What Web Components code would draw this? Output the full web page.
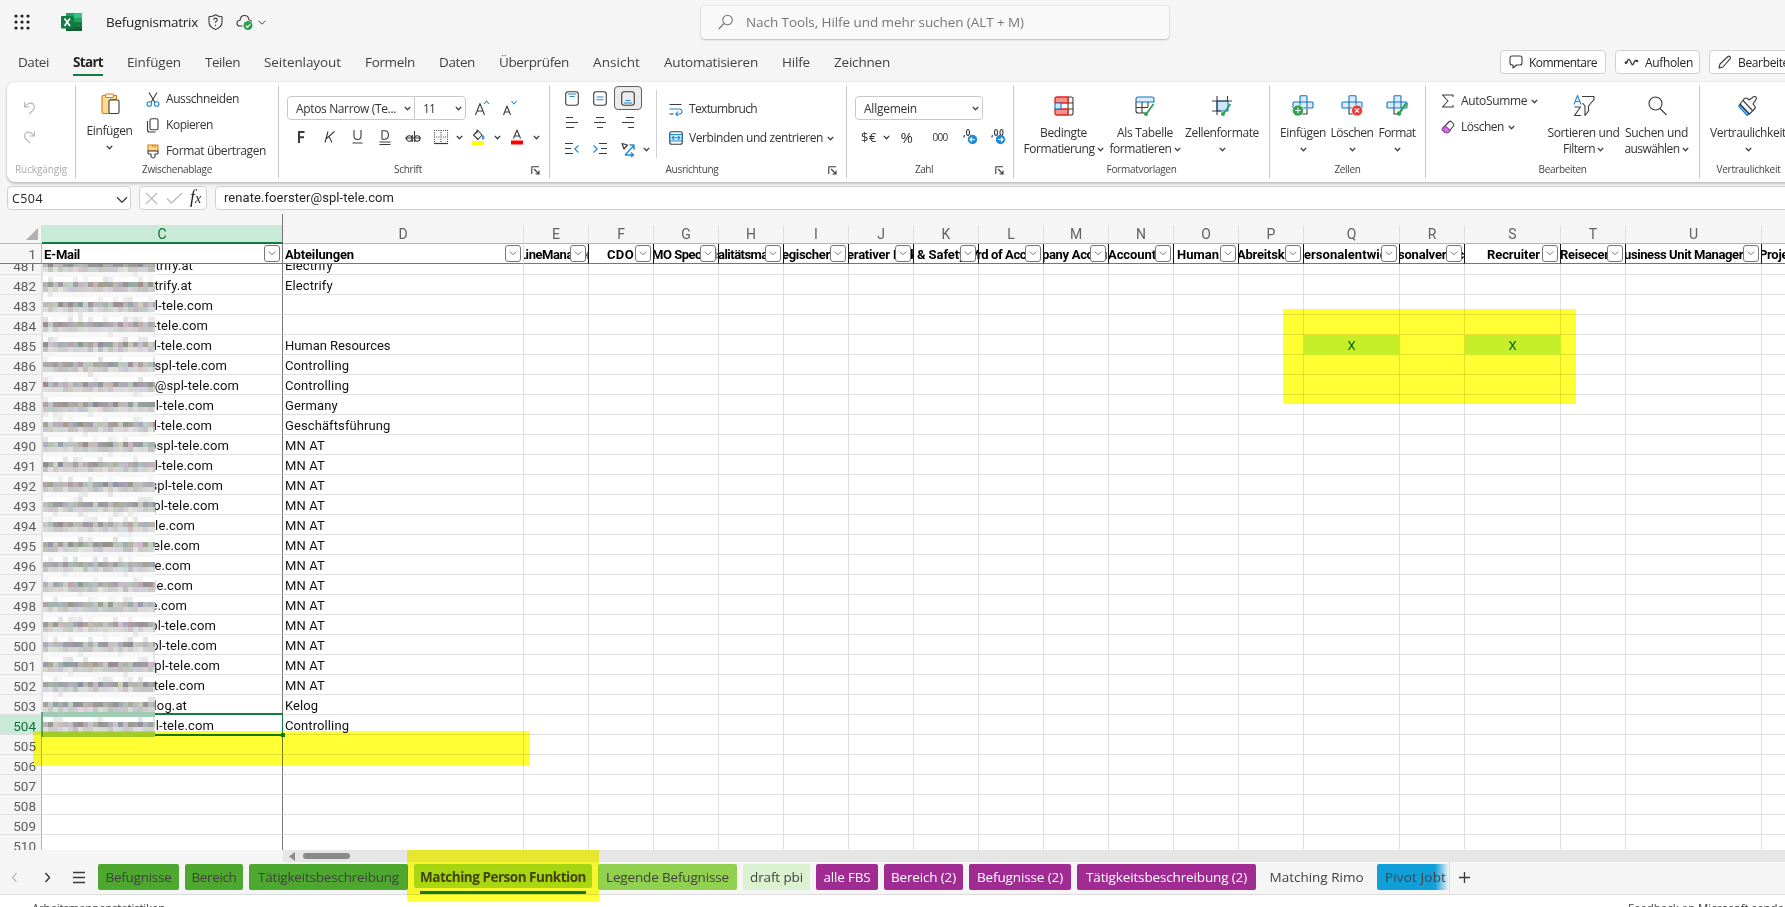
<!DOCTYPE html>
<html lang="de">
<head>
<meta charset="utf-8">
<title>Befugnismatrix</title>
<style>
  html, body { margin: 0; height: 100%; overflow: hidden; }
  body { font-family: "Open Sans", "Noto Sans", sans-serif; font-size: 13px; color: #333; background: #f5f5f5; }
</style>
</head>
<body>
<excel-app>
  <title-bar slot="title" name="Befugnismatrix"></title-bar>
  <menu-bar slot="menu"></menu-bar>
  <ribbon-bar slot="ribbon">
    <ribbon-group w="69" label="Rückgängig" lw="52" muted>
      <div style="display:flex;flex-direction:column;gap:15px;padding:15px 0 0 16px">
        <ui-icon name="undo"></ui-icon><ui-icon name="redo"></ui-icon>
      </div>
    </ribbon-group>
    <ribbon-group w="203" label="Zwischenablage" lw="70">
      <big-command icon="paste" a="Einfügen" aw="46" style="width:47px;margin:-2px 0 0 10px"></big-command>
      <div style="display:flex;flex-direction:column;margin-left:13px">
        <row-command icon="cut" w="73">Ausschneiden</row-command>
        <row-command icon="copy" w="47">Kopieren</row-command>
        <row-command icon="painter" w="100">Format übertragen</row-command>
      </div>
    </ribbon-group>
    <ribbon-group w="271" label="Schrift" lw="28" launcher>
      <div style="padding:10px 0 0 8px">
        <div style="display:flex;align-items:center">
          <combo-box style="width:128px;border-radius:4px 0 0 4px" w="100">Aptos Narrow (Te...</combo-box>
          <combo-box style="width:52px;margin-left:-1px;border-radius:0 4px 4px 0" w="12">11</combo-box>
          <ui-icon name="grow" style="margin-left:8px"></ui-icon>
          <ui-icon name="shrink" style="margin-left:12px"></ui-icon>
        </div>
        <icon-strip items="bold:28 italic:28 underline:28 double:28 strike:28 borders:28 chev:8 fill:30 chev:8 fontcolor:31 chev:8" style="margin-top:5px"></icon-strip>
      </div>
    </ribbon-group>
    <ribbon-group w="297" label="Ausrichtung" lw="53" launcher>
      <div style="display:flex;flex-direction:column;padding-left:8px;width:98px">
        <icon-strip items="vtop:28 vmid:28 vbot:28" selected="2"></icon-strip>
        <icon-strip items="left:28 center:28 right:28" style="margin-top:1px"></icon-strip>
        <icon-strip items="outdent:28 indent:28 orient:28 chev:9" style="margin-top:2px"></icon-strip>
      </div>
      <div style="display:flex;flex-direction:column;gap:3px;margin-top:4px;height:68px;border-left:1px solid #d1d1d1;padding-left:12px">
        <row-command icon="wrap" w="68" style="margin-top:6px">Textumbruch</row-command>
        <row-command icon="merge" w="134" chev>Verbinden und zentrieren</row-command>
      </div>
    </ribbon-group>
    <ribbon-group w="167" label="Zahl" lw="18" launcher>
      <div style="padding:10px 0 0 8px">
        <combo-box style="width:128px" w="53">Allgemein</combo-box>
        <icon-strip items="currency:28 chev:7 percent:34 thousands:32 decinc:28 decdec:28" style="margin-top:5px"></icon-strip>
      </div>
    </ribbon-group>
    <ribbon-group w="256" label="Formatvorlagen" lw="70">
      <big-command icon="condfmt" a="Bedingte" aw="47" b="Formatierung" bw="71" style="width:81px;margin-left:9px"></big-command>
      <big-command icon="table" a="Als Tabelle" aw="56" b="formatieren" bw="62" style="width:72px;margin-left:5px"></big-command>
      <big-command icon="cellfmt" a="Zellenformate" aw="74" style="width:76px;margin-left:3px"></big-command>
    </ribbon-group>
    <ribbon-group w="156" label="Zellen" lw="26">
      <big-command icon="cellins" a="Einfügen" aw="46" style="width:46px;margin-left:10px"></big-command>
      <big-command icon="celldel" a="Löschen" aw="43" style="width:44px;margin-left:4px"></big-command>
      <big-command icon="cellfor" a="Format" aw="37" style="width:38px;margin-left:4px"></big-command>
    </ribbon-group>
    <ribbon-group w="274" label="Bearbeiten" lw="48">
      <div style="display:flex;flex-direction:column;flex:none;padding:2px 0 0 15px;width:86px">
        <row-command icon="sum" w="66" chev>AutoSumme</row-command>
        <row-command icon="eraser" w="43" chev>Löschen</row-command>
      </div>
      <big-command icon="sort" a="Sortieren und" aw="72" b="Filtern" bw="32" style="width:73px;margin-left:20px"></big-command>
      <big-command icon="find" a="Suchen und" aw="63" b="auswählen" bw="55" style="width:65px;margin-left:4px"></big-command>
    </ribbon-group>
    <ribbon-group w="97" label="Vertraulichkeit" lw="64">
      <big-command icon="stamp" a="Vertraulichkeit" aw="76" style="width:76px;margin-left:10px"></big-command>
    </ribbon-group>
  </ribbon-bar>
  <formula-bar slot="formula" cell="C504">renate.foerster@spl-tele.com</formula-bar>
  <sheet-grid slot="grid"></sheet-grid>
  <sheet-tabs slot="tabs"></sheet-tabs>
  <status-bar slot="status"></status-bar>
  <marker-box slot="marks" style="left:1283px;top:309px;width:293px;height:95px"></marker-box>
  <marker-box slot="marks" style="left:33px;top:731px;width:497px;height:35px"></marker-box>
  <marker-box slot="marks" style="left:407px;top:850px;width:192px;height:51px"></marker-box>
</excel-app>

<script>
const DARK = '#3b3b3b', BLUE = '#1e8ad6', GREEN = '#2ea14f'

// name: [width, height, svg content]
const ICONS = {
  chev: [7, 5, `<path d="M.8 .9 3.5 3.7 6.2 .9" stroke-width="1.3"/>`],
  chevL: [12, 8, `<path d="M1 1.2 6 6.2 11 1.2" stroke-width="1.3"/>`],
  undo: [13, 14, `<path d="M1.5 1v5h5M1.8 5.8C4 2.5 8 1 10.3 3.2c2.4 2.3.8 5-1 6.6L6 13" stroke="#b5b5b5"/>`],
  redo: [13, 14, `<path d="M11.5 1v5h-5M11.2 5.8C9 2.5 5 1 2.7 3.2.3 5.500 1.900 8.200 3.700 9.800L7 13" stroke="#b5b5b5"/>`],
  paste: [20, 22, `<path d="M3.500 2.500h13v4h-6v14h-7q-1.500 0-1.500-1.500V4q0-1.500 1.500-1.500Z" fill="#fbdc94" stroke="#d9780f"/><rect x="5.500" y="1" width="8" height="3.500" rx="1.500" fill="#fff" stroke="#d9780f"/><rect x="9" y="7" width="10" height="13.500" rx="1.500" fill="#fff"/>`],
  cut: [14, 15, `<path d="M3 .5 9 10.500M11 .5 5 10.500"/><circle cx="3.300" cy="12" r="2.300" stroke="${BLUE}"/><circle cx="10.700" cy="12" r="2.300" stroke="${BLUE}"/>`],
  copy: [14, 15, `<rect x="4" y=".7" width="8" height="11" rx="1.500"/><path d="M1.500 3v9q0 2 2 2h6"/>`],
  painter: [14, 15, `<path d="M2 1h10v6H2Z" fill="#fbdc94" stroke="#d9780f"/><path d="M9 1v3M6.500 1v2" stroke="#d9780f"/><path d="M2 7h10v2q0 1-1 1H9v2.500q-2 3-4 0V10H3q-1 0-1-1Z" fill="#fff"/>`],
  grow: [16, 16, `<path d="M1.500 15 6 3.500 10.500 15M3 11h6"/><path d="m10 4 2.500-3L15 4" stroke="${BLUE}"/>`],
  shrink: [16, 16, `<path d="M1.500 15 5 6l3.500 9M2.700 12h4.600"/><path d="m9.500 1 2.500 3 2.500-3" stroke="${BLUE}"/>`],
  bold: [8, 12, `<path d="M2 12V1h5.500M2 6.300h5" stroke-width="2"/>`],
  italic: [11, 12, `<path d="M4 .5 1 11.500M10.500 .5 2.500 7.500M5 5.500l3 6"/>`],
  underline: [11, 14, `<path d="M2 0v6q0 3.500 3.500 3.500T9 6V0M.5 13h10"/>`],
  double: [12, 15, `<path d="M3 .8h2.500q4 0 4 4.200t-4 4.200H3ZM.5 12h11M.5 14.500h11"/>`],
  strike: [16, 14, `<circle cx="4.300" cy="8.500" r="2.800"/><path d="M7.300 5v7M9.500 1v11M0 8h16"/><circle cx="12.200" cy="8.500" r="2.700"/>`],
  borders: [14, 14, `<path d="M.5 0v13M13.500 0v13M7 0v13M0 .5h14M0 7h14" stroke-dasharray="1 1.200"/><path d="M0 13.500h14" stroke-width="1.200"/>`],
  fill: [14, 16, `<path d="M2.500 6 7 1.500 11 6 7 10.500ZM6 .5v4"/><path d="M12 6.500q2 3 .3 3.500T12 6.500" stroke="${BLUE}"/><path d="M1 12h12v4H1Z" fill="#ff0" stroke="none"/>`],
  fontcolor: [14, 16, `<path d="M3.500 9.500 7 1l3.500 8.500M4.600 7h4.800"/><path d="M1 11.500h12v4H1Z" fill="#f00" stroke="none"/>`],
  vtop: [14, 15, `<rect x=".7" y=".7" width="12.600" height="13.600" rx="2.500"/><path d="M3 3h8M4.500 5.500h5" stroke="${BLUE}"/>`],
  vmid: [14, 15, `<rect x=".7" y=".7" width="12.600" height="13.600" rx="2.500"/><path d="M3.500 6h7M3.500 8.700h7" stroke="${BLUE}"/>`],
  vbot: [14, 15, `<rect x=".7" y=".7" width="12.600" height="13.600" rx="2.500"/><path d="M4.500 9.500h5M3 12h8" stroke="${BLUE}"/>`],
  left: [14, 12, `<path d="M1 .5h7M1 5.500h12M1 10.500h8"/>`],
  center: [14, 12, `<path d="M3 .5h8M1 5.500h12M4 10.500h6"/>`],
  right: [14, 12, `<path d="M5 .5h8M1 5.500h12M7 10.500h6"/>`],
  outdent: [16, 12, `<path d="M1 .5h8M1 5.500h6M1 10.500h8"/><path d="M14.500 2.500 10.800 6l3.700 3.500" stroke="${BLUE}"/>`],
  indent: [16, 12, `<path d="M7 .5h8M9 5.500h6M7 10.500h8"/><path d="M1.500 2.500 5.200 6 1.500 9.500" stroke="${BLUE}"/>`],
  orient: [15, 15, `<path d="M1 1.500 6.500 3 3 7Z" stroke-width="1.200"/><path d="M4 13 13 3.500M8.500 3H13v5M4 13h8M10 10.500l2.500 2.500-2.500 2" stroke="${BLUE}" stroke-width="1.300"/>`],
  wrap: [14, 13, `<path d="M.5 1.500h12M.5 11h4"/><path d="M.5 6H10q3 0 3 2.500T10 11H7M9 8.500 6.700 11 9 13" stroke="${BLUE}"/>`],
  merge: [14, 14, `<rect x=".7" y=".7" width="12.600" height="12.600" rx="2"/><path d="M1 3.500h12v6.500H1Z" fill="#dcecfa" stroke="${BLUE}"/><path d="M3 6.800h8M5 4.800 3 6.800l2 2M9 4.800l2 2-2 2" stroke="${BLUE}"/>`],
  decinc: [15, 16, `<path d="M1.500 6 .8 8.500"/><ellipse cx="5" cy="3.500" rx="1.500" ry="3"/><circle cx="9.500" cy="10.500" r="4.700" fill="${BLUE}" stroke="none"/><path d="M12 10.500H7M9 8.500l-2 2 2 2" stroke="#fff"/>`],
  decdec: [15, 16, `<path d="M1.500 6 .8 8.500"/><ellipse cx="5" cy="3.500" rx="1.500" ry="3"/><ellipse cx="10.500" cy="3.500" rx="1.500" ry="3"/><circle cx="9.500" cy="10.500" r="4.700" fill="${BLUE}" stroke="none"/><path d="M7 10.500h5M10 8.500l2 2-2 2" stroke="#fff"/>`],
  condfmt: [20, 20, `<path d="M14 1h3q2 0 2 2v14q0 2-2 2h-3M14 7h5M14 13h5M14 1v18" /><path d="M14 1v6H1V3q0-2 2-2ZM14 19v-6H1v4q0 2 2 2Z" fill="#ff8f8f" stroke="#d9241c" stroke-width="1.300"/><path d="M1 7h6v6H1Z" fill="#cfe6fa" stroke="#1173c5"/>`],
  table: [20, 20, `<path d="M1 6v9q0 2 2 2h7M1 11.500h12M7 6v11M13 6v5"/><path d="M1 6V3q0-2 2-2h14q2 0 2 2v3Z" fill="#dcecfa" stroke="#1173c5"/><path d="m18.500 8-6.500 9" stroke="${GREEN}" stroke-width="1.800"/><circle cx="11" cy="18" r="2" fill="${GREEN}" stroke="none"/>`],
  cellfmt: [20, 20, `<path d="M5 5h11v10H5Z" fill="#cfe6fa" stroke="#1173c5"/><path d="M5 0v19M15.500 0v5M0 5h20M0 15h9"/><path d="m18.500 8-6.500 9" stroke="${GREEN}" stroke-width="1.800"/><circle cx="11" cy="18" r="2" fill="${GREEN}" stroke="none"/>`],
  cellins: [22, 22, `<path d="M8 13v6h7v-5M2 13V7"/><path d="M8 1.500q0-.8.800-.8h5.400q.8 0 .8.800V7h5q1 0 1 1v4q0 1-1 1H2q-1 0-1-1V8q0-1 1-1h6Z" fill="#dcecfa" stroke="#1173c5"/><path d="M8 7v6M15 7v6M8 7h7" stroke="#1173c5"/><circle cx="6" cy="15.500" r="5.500" fill="${GREEN}" stroke="#fff" stroke-width=".6"/><path d="M3.200 15.500h5.600M6 12.700v5.600" stroke="#fff"/>`],
  celldel: [22, 22, `<path d="M8 13v6h5"/><path d="M8 1.500q0-.8.800-.8h5.400q.8 0 .8.800V7h5q1 0 1 1v4q0 1-1 1H2q-1 0-1-1V8q0-1 1-1h6Z" fill="#dcecfa" stroke="#1173c5"/><path d="M8 7v6M15 7v6M8 7h7" stroke="#1173c5"/><circle cx="16" cy="15.500" r="5.500" fill="#e83b3b" stroke="#fff" stroke-width=".6"/><path d="m14 13.500 4 4M18 13.500l-4 4" stroke="#fff"/>`],
  cellfor: [22, 22, `<path d="M8 13v6h3"/><path d="M8 1.500q0-.8.800-.8h5.400q.8 0 .8.800V7h5q1 0 1 1v4q0 1-1 1H2q-1 0-1-1V8q0-1 1-1h6Z" fill="#dcecfa" stroke="#1173c5"/><path d="M8 7v6M15 7v6M8 7h7" stroke="#1173c5"/><path d="m20.500 8-6.500 9" stroke="${GREEN}" stroke-width="2.200"/><circle cx="13" cy="18.500" r="2.200" fill="${GREEN}" stroke="none"/>`],
  sum: [14, 14, `<path d="M12 3V1H1.500l5.500 6-5.500 6H12v-2"/>`],
  eraser: [14, 14, `<path d="m1.500 8.500 6.800-7q1-.8 2 0l2.200 2.500q.8 1 0 2L7 12.500H4.500L1.500 10q-.7-.8 0-1.500Z"/><path d="M1.500 8.500 4.300 6l5 4.500-2.300 2.300H4.500L1.500 10q-.7-.8 0-1.500Z" fill="#c878d0" stroke="#a044ad"/>`],
  sort: [22, 22, `<path d="m1 9.500 3.500-9 3.500 9M2.200 6.500h4.600" stroke="${BLUE}"/><path d="M1.500 12H7.500L1.500 20.500H8"/><path d="M9 1.500h12v3l-5.500 6.500v5l-3.500 4.500V11L9.500 8"/>`],
  find: [20, 20, `<circle cx="8.500" cy="7.500" r="6.500"/><path d="m13 12.500 6.500 6.500"/>`],
  stamp: [20, 20, `<path d="m1.500 8.500 9.500 9.500-2 1.500L.8 10.500Z" fill="#7dbcf0" stroke="#1173c5"/><path d="m2 8 4-5q2-2 4 0l1 1 4.500-3.200q1.500-.8 2.500.4t0 2.400L15 8l1.500 1.800q1.500 1.700 0 3.200L11.500 18Z" fill="#fff"/><path d="m5 4.500 9.500 10"/>`],
  launcher: [9, 9, `<path d="M.8 8V.8H8M3 3l5 5M8 4.500V8H4.500"/>`],
  waffle: [16, 16, [2, 8, 14].map(y => [2, 8, 14].map(x => `<circle cx="${x}" cy="${y}" r="1.600" fill="#222" stroke="none"/>`).join('')).join('')],
  search: [16, 16, `<circle cx="9.500" cy="6" r="4.800" stroke="#777"/><path d="M6 9.500.8 15" stroke="#777"/>`],
  shield: [15, 16, `<path d="M7.500 .8q3 2 6.500 2v5.500q0 4.700-6.500 7.200Q1 13 1 8.300V2.800q3.500 0 6.500-2Z"/><path d="M5.700 5.800q.2-1.700 1.800-1.700t1.700 1.600q0 1-1 1.600-.7.500-.7 1.500M7.500 10.800v1.200"/>`],
  cloud: [17, 16, `<path d="M6.500 12H4Q1 12 1 9.200T4 6.500Q4.500 1.500 8.500 1.500T13 6q2 0 2.700 1.500"/><circle cx="12" cy="11.500" r="4.500" fill="${GREEN}" stroke="none"/><path d="m9.800 11.700 1.600 1.600 3-3.300" stroke="#fff"/>`],
  comment: [14, 14, `<path d="M3 1h8q2 0 2 2v5q0 2-2 2H7.500L4 13v-3H3Q1 10 1 8V3q0-2 2-2Z"/>`],
  catchup: [15, 8, `<path d="M1 5q1.500 1 2.500-2T6 2.500l2 4q1 1 2-2t2.500-1.500" stroke-width="1.300"/><circle cx="2" cy="4.500" r="1.300" fill="#3b3b3b" stroke="none"/><circle cx="13" cy="3" r="1.300" fill="#3b3b3b" stroke="none"/>`],
  pencil: [14, 14, `<path d="m1 13 1-4 8-7.500q1-.8 2 .2t.2 2L5 12Z"/>`],
  cross: [13, 13, `<path d="m1 1 11 11M12 1 1 12" stroke="#bbb" stroke-width="1.300"/>`],
  check: [17, 12, `<path d="m1 6.500 4.500 4.500L16 1" stroke="#bbb" stroke-width="1.300"/>`],
  prev: [7, 11, `<path d="M5.500 1 1.500 5.500l4 4.500" stroke="#bbb" stroke-width="1.300"/>`],
  next: [7, 11, `<path d="m1.500 1 4 4.500-4 4.500" stroke-width="1.500"/>`],
  menu: [12, 11, `<path d="M0 .5h12M0 5.500h12M0 10.500h12" stroke-width="1.300"/>`],
  plus: [11, 11, `<path d="M0 5.500h11M5.500 0v11" stroke-width="1.300"/>`]
}

// icons made of characters
const GLYPHS = { currency: ['$€', 13, 16], percent: ['%', 15, 13], thousands: ['000', 10, 15] }

const glyph = (name) => {
  const [text, size, w] = GLYPHS[name]
  return `<fit-text w="${w}" style="font-size:${size}px">${text}</fit-text>`
}

const icon = (name, extra = '') => GLYPHS[name] ? glyph(name) : `<ui-icon name="${name}" ${extra}></ui-icon>`

class Base extends HTMLElement {
  constructor () {
    super()
    this.attachShadow({mode: 'open'})
  }

  connectedCallback () {
    this.shadowRoot.innerHTML = `<style>${this.css()}</style>${this.html()}`
  }

  css () { return '' }
  html () { return '<slot></slot>' }
  attr (name) { return this.getAttribute(name) || '' }
}

class ExcelApp extends Base {
  css () {
    return `
      :host { display: flex; flex-direction: column; position: relative; width: 100%; height: 907px; overflow: hidden; isolation: isolate; background: #f5f5f5; }
    `
  }
  html () {
    return ['title', 'menu', 'ribbon', 'formula', 'grid', 'tabs', 'status', 'marks'].map(n => `<slot name="${n}"></slot>`).join('')
  }
}

class UiIcon extends Base {
  css () {
    return `
      :host { display: inline-flex; flex: none; }
      svg { display: block; overflow: visible; }
    `
  }
  html () {
    const [w, h, body] = ICONS[this.attr('name')]
    return `<svg width="${w}" height="${h}" viewBox="0 0 ${w} ${h}" fill="none" stroke="${DARK}" stroke-width="1.1" stroke-linejoin="round">${body}</svg>`
  }
}

// Text tracked in or out so that it fills a given width
class FitText extends Base {
  css () {
    return `
      :host { display: inline-block; white-space: pre; flex: none; width: ${this.attr('w')}px; }
    `
  }
  html () { return '<span><slot></slot></span>' }
  connectedCallback () {
    super.connectedCallback()
    const span = this.shadowRoot.querySelector('span')
    const diff = this.attr('w') - span.getBoundingClientRect().width
    span.style.letterSpacing = (diff / this.textContent.length).toFixed(3) + 'px'
  }
}

class TitleBar extends Base {
  css () {
    return `
      :host { display: flex; align-items: center; height: 44px; flex: none; padding-left: 14px; box-sizing: border-box; }
      .logo { margin: 0 24px 0 31px; }
      .name { font-size: 13.5px; color: #242424; }
      .search { display: flex; align-items: center; box-sizing: border-box; width: 468px; height: 33px; margin-left: 435px; padding-left: 17px; gap: 12px;
        background: #f9f9f9; border-radius: 4px; box-shadow: 0 0 2px #0002, 0 1px 2px #0003; color: #777; font-size: 13.5px; }
    `
  }
  html () {
    return `
      ${icon('waffle')}
      <svg class="logo" width="21" height="18" viewBox="0 0 21 18">
        <path d="M5 0h16v18H5Z" fill="#185c37"/><path d="M5 0h8v5H5Z" fill="#21a366"/><path d="M13 0h8v5h-8Z" fill="#33c481"/>
        <path d="M5 5h8v4.500H5Z" fill="#107c41"/><path d="M13 5h8v4.500h-8Z" fill="#21a366"/><path d="M13 9.500h8v4.500h-8Z" fill="#107c41"/>
        <rect y="3" width="12.500" height="12.500" rx="1" fill="#107c41"/><path d="m3.500 5.500 5.500 7.500M9 5.500 3.500 13" stroke="#fff" stroke-width="1.700"/>
      </svg>
      <fit-text class="name" w="92">${this.attr('name')}</fit-text>
      ${icon('shield', 'style="margin-left:10px"')}
      ${icon('cloud', 'style="margin-left:13px"')}
      <svg width="8" height="5" viewBox="0 0 8 5" style="margin-left:5px" fill="none" stroke="#444"><path d="m.5 .7 3.500 3.500L7.500 .7"/></svg>
      <div class="search">${icon('search')}<fit-text w="278">Nach Tools, Hilfe und mehr suchen (ALT + M)</fit-text></div>
    `
  }
}

class MenuBar extends Base {
  css () {
    return `
      :host { display: flex; align-items: center; height: 38px; flex: none; font-size: 13.5px; color: #424242; }
      nav { display: flex; gap: 24px; padding-left: 18px; width: 1482px; box-sizing: border-box; flex: none; height: 38px; }
      nav > * { height: 30px; line-height: 36px; border-bottom: 2px solid transparent; }
      .active { font-weight: 700; color: #242424; border-color: #107c41; }
      .buttons { display: flex; gap: 9px; margin: -2px 0 0 18px; flex: none; }
      .button { display: flex; align-items: center; gap: 6px; height: 24px; box-sizing: border-box; background: #fff; border: 1px solid #d1d1d1; border-radius: 4px; padding-left: 8px; font-size: 12px; color: #242424; }
    `
  }
  html () {
    const items = [['Datei', 31], ['Start', 30], ['Einfügen', 54], ['Teilen', 35], ['Seitenlayout', 77], ['Formeln', 50], ['Daten', 36],
      ['Überprüfen', 70], ['Ansicht', 47], ['Automatisieren', 94], ['Hilfe', 28], ['Zeichnen', 56]]
    const buttons = [['comment', 'Kommentare', 68, 106], ['catchup', 'Aufholen', 48, 85], ['pencil', 'Bearbeiten', 58, 110]]
    return `
      <nav>${items.map(([t, w]) => `<fit-text w="${w}" class="${t == 'Start' ? 'active' : ''}">${t}</fit-text>`).join('')}</nav>
      <div class="buttons">
        ${buttons.map(([i, t, w, bw]) => `<div class="button" style="width:${bw}px">${icon(i)}<fit-text w="${w}">${t}</fit-text></div>`).join('')}
      </div>
    `
  }
}

class RibbonBar extends Base {
  css () {
    return `
      :host { display: flex; flex: none; height: 100px; margin: 0 -10px 0 7px; padding-top: 4px; box-sizing: border-box;
        background: #fff; border-radius: 8px; box-shadow: 0 0 2px #0002, 0 2px 3px #0003; font-size: 12px; color: #333; }
    `
  }
}

class RibbonGroup extends Base {
  css () {
    const muted = this.hasAttribute('muted')
    return `
      :host { display: flex; flex-direction: column; flex: none; box-sizing: border-box; width: ${this.attr('w')}px; height: 92px; border-right: 1px solid #c8c8c8; }
      :host(:last-of-type) { border: 0; }
      .body { display: flex; align-items: flex-start; height: 75px; }
      .label { display: flex; align-items: center; height: 16px; line-height: 16px; font-size: 10px; color: ${muted ? '#aaa' : '#444'}; }
      .text { flex: 1; text-align: center; }
      .launch { width: 12px; margin-right: 6px; margin-left: -6px; padding-top: 4px; }
    `
  }
  html () {
    return `
      <div class="body"><slot></slot></div>
      <div class="label">
        <div class="text"><fit-text w="${this.attr('lw')}">${this.attr('label')}</fit-text></div>
        ${this.hasAttribute('launcher') ? `<div class="launch">${icon('launcher')}</div>` : ''}
      </div>
    `
  }
}

class BigCommand extends Base {
  css () {
    return `
      :host { display: flex; flex-direction: column; align-items: center; flex: none; padding-top: 10px; line-height: 16px; }
      .icon { display: flex; align-items: center; justify-content: center; height: 20px; margin-bottom: 9px; }
      .row { display: flex; align-items: center; gap: 2px; height: 16px; }
    `
  }
  html () {
    const b = this.attr('b')
    return `
      <div class="icon">${icon(this.attr('icon'))}</div>
      <fit-text w="${this.attr('aw')}">${this.attr('a')}</fit-text>
      <div class="row">${b ? `<fit-text w="${this.attr('bw')}">${b}</fit-text>` : ''}${icon('chev')}</div>
    `
  }
}

class RowCommand extends Base {
  css () {
    return `
      :host { display: flex; align-items: center; height: 26px; line-height: 26px; }
      .icon { width: 20px; display: flex; align-items: center; flex: none; }
      .chev { display: flex; margin-left: 4px; flex: none; }
    `
  }
  html () {
    return `
      <div class="icon">${icon(this.attr('icon'))}</div>
      <fit-text w="${this.attr('w')}">${this.textContent}</fit-text>
      ${this.hasAttribute('chev') ? `<div class="chev">${icon('chev')}</div>` : ''}
    `
  }
}

class ComboBox extends Base {
  css () {
    return `
      :host { display: flex; align-items: center; justify-content: space-between; box-sizing: border-box; height: 24px; padding: 0 3px 0 8px;
        border: 1px solid #c8c8c8; border-radius: 4px; background: #fff; }
    `
  }
  html () { return `<fit-text w="${this.attr('w')}">${this.textContent}</fit-text>${icon('chev')}` }
}

class IconStrip extends Base {
  css () {
    return `
      :host { display: flex; align-items: center; height: 24px; }
      .item { display: flex; align-items: center; justify-content: center; height: 24px; box-sizing: border-box; flex: none; }
      .selected { border: 1px solid #616161; border-radius: 4px; background: #ebebeb; }
    `
  }
  html () {
    return this.attr('items').split(' ').map((item, i) => {
      const [name, w] = item.split(':')
      return `<div class="item ${this.attr('selected') === String(i) ? 'selected' : ''}" style="width:${w}px">${icon(name)}</div>`
    }).join('')
  }
}

class FormulaBar extends Base {
  css () {
    return `
      :host { display: flex; flex: none; height: 24px; margin-top: 4px; padding-left: 7px; color: #242424; }
      div { display: flex; align-items: center; box-sizing: border-box; height: 24px; background: #fff; border: 1px solid #d1d1d1; border-radius: 4px; flex: none; }
      .name { width: 124px; justify-content: space-between; padding: 0 2px 0 4px; font-size: 12.5px; }
      .name ui-icon { margin-top: 3px; }
      .tools { width: 68px; margin-left: 8px; padding-left: 5px; gap: 8px; }
      .fx { font: italic 18px/20px "Liberation Serif", serif; margin-left: -1px; }
      .fx small { font-size: 14px; }
      .input { flex: 1; margin: 0 -8px 0 8px; padding: 0 0 1px 8px; font: 13px Roboto, sans-serif; }
    `
  }
  html () {
    return `
      <div class="name"><fit-text w="31">${this.attr('cell')}</fit-text>${icon('chevL')}</div>
      <div class="tools">${icon('cross')}${icon('check')}<span class="fx">f<small>x</small></span></div>
      <div class="input"><fit-text w="170">${this.textContent}</fit-text></div>
    `
  }
}

// letter, width, header text, header text width, left offset
const COLUMNS = [
  ['C', 241, 'E-Mail', 36, 2], ['D', 241, 'Abteilungen', 69, 2],
  ['E', 65, 'LineManager', 72, -5], ['F', 65, 'CDO', 27, 18], ['G', 65, 'MO Specialist', 75, -2], ['H', 65, 'alitätsmana', 63, -1],
  ['I', 65, 'egischer Ei', 61, -2], ['J', 65, 'erativer Eink', 70, -2], ['K', 65, '& Safety M', 63, 3], ['L', 65, 'rd of Accou', 63, -2],
  ['M', 65, 'pany Accou', 65, -2], ['N', 65, 'Account of', 63, -1], ['O', 65, 'Human', 42, 3], ['P', 65, 'Abreitskräf', 63, -2],
  ['Q', 96, 'ersonalentwickl', 93, 0], ['R', 65, 'sonalverrec', 66, -2], ['S', 96, 'Recruiter', 53, 22], ['T', 65, 'Reisecente', 62, -1],
  ['U', 136, 'usiness Unit Manager', 119, -2], ['V', 65, 'Projekt', 40, -3]
]

// row, visible end of the address, its right edge, department
const ROWS = [
  [481, 'ctrify.at', 193, 'Electrify'], [482, 'trify.at', 192, 'Electrify'], [483, 'l-tele.com', 213], [484, '-tele.com', 208],
  [485, 'l-tele.com', 212, 'Human Resources'], [486, 'spl-tele.com', 227, 'Controlling'], [487, '@spl-tele.com', 239, 'Controlling'],
  [488, 'l-tele.com', 214, 'Germany'], [489, 'l-tele.com', 212, 'Geschäftsführung'], [490, '@spl-tele.com', 229, 'MN AT'],
  [491, 'l-tele.com', 213, 'MN AT'], [492, 'spl-tele.com', 223, 'MN AT'], [493, 'pl-tele.com', 219, 'MN AT'], [494, 'le.com', 195, 'MN AT'],
  [495, 'ele.com', 200, 'MN AT'], [496, 'e.com', 191, 'MN AT'], [497, 'le.com', 193, 'MN AT'], [498, 'e.com', 187, 'MN AT'],
  [499, 'pl-tele.com', 216, 'MN AT'], [500, 'pl-tele.com', 217, 'MN AT'], [501, 'pl-tele.com', 220, 'MN AT'], [502, 'tele.com', 205, 'MN AT'],
  [503, 'log.at', 187, 'Kelog'], [504, 'l-tele.com', 214, 'Controlling'], [505], [506], [507], [508], [509], [510]
]

class SheetGrid extends Base {
  css () {
    return `
      :host { display: flex; flex-direction: column; flex: none; position: relative; height: 640px; padding-top: 4px; box-sizing: border-box; overflow: hidden;
        font: 13px Roboto, "Liberation Sans", sans-serif; color: #111; }
      .gutter { width: 283px; height: 11px; border-right: 1px solid #777; box-sizing: border-box; flex: none; }
      .row { display: flex; flex: none; height: 20px; }
      .row > * { box-sizing: border-box; flex: none; border-right: 1px solid #e0e0e0; border-bottom: 1px solid #e0e0e0; overflow: hidden; white-space: pre; line-height: 22px; }
      .row > .num { width: 42px; border-right-color: #b5b5b5; background: #f5f5f5; color: #5c5c5c; text-align: right; padding-right: 5px; font-size: 13.5px; }
      .row > .frozen { border-right-color: #777; }
      .row.letters { height: 19px; }
      .letters > * { text-align: center; border-bottom: 1px solid #b5b5b5; color: #616161; font-size: 14px; line-height: 19px; }
      .letters > .corner { width: 42px; display: flex; justify-content: flex-end; align-items: flex-end; padding: 0 3px 3px 0; }
      .letters > .current { background: #caead8; border-bottom: 2px solid #107c41; color: #0e6e3a; }
      .titles { background: #fff; }
      .titles > * { border-bottom-color: #777; border-right-color: #111; display: flex; font-weight: 700; color: #000; line-height: 21px; }
      .titles > .plain { border-right-color: #e0e0e0; }
      .titles > .num { font-weight: 400; display: block; border-right-color: #b5b5b5; }
      .titles .text { flex: 1 1 0; width: 0; overflow: visible; }
      .filter { width: 16px; height: 17px; box-sizing: border-box; margin: 1px 2px 0 0; border: 1px solid #777; border-radius: 3px; background: #fff; display: flex; align-items: center; justify-content: center; flex: none; position: relative; }
      .body { height: 586px; overflow: hidden; background: #fff; flex: none; }
      .rows { margin-top: -9px; }
      .mail { display: flex; justify-content: flex-end; }
      .rows .cell { padding-left: 2px; }
      .rows .cell.mail { padding-left: 0; }
      .rows .x { background: #c6efce; color: #006100; text-align: center; padding: 0; border-color: #c6efce; }
      .rows .num.current { background: #caead8; color: #0e6e3a; }
      .select { position: absolute; left: 41px; top: 503px; width: 242px; height: 23px; border: 2px solid #107c41; border-right-width: 1px; box-sizing: border-box; }
      .handle { position: absolute; left: 281px; top: 523px; width: 4px; height: 4px; background: #107c41; }
      pixel-mask { position: absolute; left: 41px; top: 54px; }
    `
  }
  html () {
    return `
      <div class="gutter"></div>
      <div class="row letters">
        <div class="corner"><svg width="12" height="12"><path d="M12 0v12H0Z" fill="#b0b0b0"/></svg></div>
        ${COLUMNS.map(([c, w]) => `<div class="${c == 'C' ? 'frozen current' : ''}" style="width:${w}px">${c}</div>`).join('')}
      </div>
      <div class="row titles">
        <div class="num">1</div>
        ${COLUMNS.map(([c, w, text, tw, x]) => `<div class="${c == 'C' ? 'frozen' : c == 'D' ? 'plain' : ''}" style="width:${w}px">
          <div class="text"><fit-text w="${tw}" style="margin-left:${x}px">${text}</fit-text></div>
          ${c == 'V' ? '' : `<div class="filter"><svg width="8" height="5" fill="none" stroke="#777"><path d="m.8 .6 3.200 3.200L7.200 .6"/></svg></div>`}
        </div>`).join('')}
      </div>
      <div class="body"><div class="rows">${ROWS.map(row => this.row(row)).join('')}</div></div>
      <div class="select"></div>
      <pixel-mask></pixel-mask>
      <div class="handle"></div>
    `
  }
  row ([n, mail = '', end = 0, dept = '']) {
    const cells = COLUMNS.map(([c, w]) => {
      if (c == 'C') return `<div class="cell mail frozen" style="width:${w}px;padding-right:${end ? 282 - end : 0}px"><span style="letter-spacing:.13px">${mail}</span></div>`
      if (c == 'D') return `<div class="cell" style="width:${w}px;letter-spacing:.1px">${dept == 'Human Resources' ? `<fit-text w="107">${dept}</fit-text>` : dept}</div>`
      const x = n == 485 && (c == 'Q' || c == 'S')
      return `<div class="cell ${x ? 'x' : ''}" style="width:${w}px">${x ? 'X' : ''}</div>`
    })
    return `<div class="row"><div class="num ${n == 504 ? 'current' : ''}">${n}</div>${cells.join('')}</div>`
  }
}

// Mosaic that hides the personal part of the addresses
class PixelMask extends Base {
  css () {
    return `
      :host { display: block; }
      svg { display: block; }
    `
  }
  html () {
    let seed = 17
    const rnd = () => (seed = (seed * 16807) % 2147483647) / 2147483647
    const rect = (x, y, w, h, fill) => `<rect x="${x}" y="${y}" width="${w}" height="${h}" fill="${fill}"/>`
    const tone = (base, spread) => {
      const g = base + (rnd() - .5) * spread
      return `rgb(${[0, 0, 0].map(() => Math.min(255, Math.round(g + (rnd() - .5) * spread * .45))).join()})`
    }
    let out = rect(2, 0, 112, 473, '#f7f7f7') + rect(0, 0, 2, 473, '#e2e2e2')
    for (let r = 0; r < 24; r++) {
      const y = r * 20 - 7
      out += rect(2, y, 112, 10, '#fff')
      for (let i = 0; i < 23; i++) {
        const x = 2 + i * 5
        const w = Math.min(5, 114 - x)
        if (rnd() < .25) out += rect(x, y, w, 5, tone(236, 22))
        out += rect(x, y + 5, w, 5, tone(172, 52))
        out += rect(x, y + 10, w, 5, tone(208, 30))
        if (rnd() < .1) out += rect(x, y + 15, w, 5, tone(236, 16))
      }
    }
    out += rect(0, 448, 114, 5, '#a0ccb4') + rect(0, 468, 114, 5, '#a0ccb4') + rect(0, 448, 2, 25, '#5ca680')
    return `<svg width="114" height="473" shape-rendering="crispEdges">${out}</svg>`
  }
}

class SheetTabs extends Base {
  css () {
    return `
      :host { display: flex; flex-direction: column; flex: none; height: 45px; box-sizing: border-box; border-bottom: 1px solid #dcdcdc; font-size: 13.5px; color: #424242; }
      .scroll { display: flex; align-items: center; height: 12px; margin-left: 283px; padding-left: 6px; gap: 8px; background: #e6e6e6; flex: none; }
      .thumb { width: 47px; height: 6px; border-radius: 3px; background: #8a8a8a; }
      .bar { display: flex; align-items: flex-start; padding-top: 2px; gap: 6px; height: 30px; }
      .nav { display: flex; align-items: center; width: 92px; height: 26px; flex: none; padding-left: 11px; box-sizing: border-box; }
      .tab { display: flex; align-items: center; justify-content: center; height: 26px; border-radius: 2px; flex: none; line-height: 24px; }
      .slot { display: flex; flex-direction: column; align-items: center; gap: 3px; height: 30px; flex: none; }
      .slot .tab { height: 24px; padding-bottom: 0; font-weight: 700; line-height: 28px; }
      .slot fit-text { margin-top: 2px; line-height: 22px; }
      .line { width: 166px; height: 3px; background: #107c41; }
      .cut { width: 72px; overflow: hidden; justify-content: flex-start; padding-left: 8px; box-sizing: border-box; margin-right: -6px;
        background: linear-gradient(90deg, #119fda 58px, #f5f5f5 72px); border-radius: 2px 0 0 2px; }
      .add { display: flex; align-items: center; height: 31px; margin-top: -2px; padding: 0 0 0 9px; border-left: 1px solid #dcdcdc; }
    `
  }
  html () {
    const tabs = [['Befugnisse', 81, 66, '#4ea72e'], ['Bereich', 58, 45, '#4ea72e'], ['Tätigkeitsbeschreibung', 159, 141, '#4ea72e'],
      ['Matching Person Funktion', 178, 166, 'linear-gradient(#a5d54a,#aad84a)'], ['Legende Befugnisse', 139, 123, '#92d050'], ['draft pbi', 67, 53, '#daf2d0'],
      ['alle FBS', 62, 47, '#a02b93'], ['Bereich (2)', 79, 65, '#a02b93'], ['Befugnisse (2)', 102, 86, '#a02b93'],
      ['Tätigkeitsbeschreibung (2)', 179, 161, '#a02b93'], ['Matching Rimo', 109, 94, 'none']]
    return `
      <div class="scroll"><svg width="6" height="9"><path d="M6 0v9L0 4.500Z" fill="#8a8a8a"/></svg><div class="thumb"></div></div>
      <div class="bar">
        <div class="nav">${icon('prev')}${icon('next', 'style="margin-left:26px"')}${icon('menu', 'style="margin-left:22px"')}</div>
        ${tabs.map(([text, w, tw, bg]) => {
          const tab = `<div class="tab" style="width:${w}px;background:${bg};${bg == '#a02b93' ? 'color:#fff' : ''}"><fit-text w="${tw}">${text}</fit-text></div>`
          return text == 'Matching Person Funktion' ? `<div class="slot">${tab}<div class="line"></div></div>` : tab
        }).join('')}
        <div class="tab cut"><fit-text w="61">Pivot Jobt</fit-text></div>
        <div class="add">${icon('plus')}</div>
      </div>
    `
  }
}

class StatusBar extends Base {
  css () {
    return `
      :host { display: flex; justify-content: space-between; flex: none; height: 12px; overflow: hidden; background: #fff; padding: 0 0 0 32px; margin-right: -6px; font-size: 11.5px; line-height: 16px; color: #424242; }
      fit-text { margin-top: 5px; }
    `
  }
  html () {
    return `<fit-text w="133">Arbeitsmappenstatistiken</fit-text><fit-text w="163">Feedback an Microsoft senden</fit-text>`
  }
}

// Yellow highlighter stroke laid over the page
class MarkerBox extends Base {
  css () {
    return `
      :host { display: block; position: absolute; background: #ffff33; mix-blend-mode: multiply; }
    `
  }
  html () { return '' }
}

customElements.define('excel-app', ExcelApp)
customElements.define('title-bar', TitleBar)
customElements.define('menu-bar', MenuBar)
customElements.define('ribbon-bar', RibbonBar)
customElements.define('ribbon-group', RibbonGroup)
customElements.define('big-command', BigCommand)
customElements.define('row-command', RowCommand)
customElements.define('combo-box', ComboBox)
customElements.define('icon-strip', IconStrip)
customElements.define('formula-bar', FormulaBar)
customElements.define('sheet-grid', SheetGrid)
customElements.define('pixel-mask', PixelMask)
customElements.define('sheet-tabs', SheetTabs)
customElements.define('status-bar', StatusBar)
customElements.define('marker-box', MarkerBox)
customElements.define('ui-icon', UiIcon)
// measures its text, so it comes after everything that sets a font
customElements.define('fit-text', FitText)
</script>
</body>
</html>
